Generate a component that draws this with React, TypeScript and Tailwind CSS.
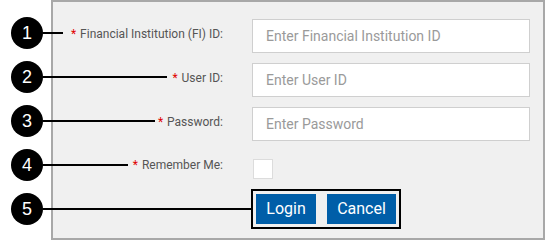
const fields = [
  { label: "Financial Institution (FI) ID:", placeholder: "Enter Financial Institution ID" },
  { label: "User ID:", placeholder: "Enter User ID" },
  { label: "Password:", placeholder: "Enter Password" },
];

// callout markers: circle centre y and where the leader line stops
const callouts = [
  { n: 1, y: 33, end: 63 },
  { n: 2, y: 77, end: 167 },
  { n: 3, y: 121, end: 155 },
  { n: 4, y: 165, end: 128 },
  { n: 5, y: 209, end: 252 },
];

function Label({ text, pb }: { text: string; pb: string }) {
  return (
    <div className={`w-[170px] shrink-0 text-right text-[12px] text-[#555] ${pb}`}>
      <span className="text-[#e00000] mr-[4px]">*</span>
      {text}
    </div>
  );
}

export default function App() {
  return (
    <div
      className="relative w-[545px] h-[240px] bg-white overflow-hidden"
      style={{ fontFamily: "Roboto, 'Liberation Sans', sans-serif" }}
    >
      <div className="ml-[51px] w-[494px] h-[240px] border-2 border-[#a8a8a8] bg-[#f0f0f0] pt-[17px]">
        <div className="flex flex-col gap-[10px]">
          {fields.map((f) => (
            <div key={f.label} className="flex items-center gap-[29px] h-[34px]">
              <Label text={f.label} pb="pb-[5px]" />
              <input
                type={f.label === "Password:" ? "password" : "text"}
                placeholder={f.placeholder}
                className="w-[278px] h-[34px] bg-white border border-[#cfcfcf] px-[13px] text-[14px] text-[#333] placeholder:text-[#9a9a9a] outline-none"
              />
            </div>
          ))}
        </div>

        <div className="flex items-center gap-[30px] mt-[18px] h-[20px]">
          <Label text="Remember Me:" pb="pb-[9px]" />
          <div className="w-[20px] h-[20px] bg-white border border-[#dcdcdc]" />
        </div>

        <div className="flex mt-[10px] pl-[198px]">
          <div className="flex gap-[11px] border-2 border-black p-[3px]">
            <button className="w-[60px] h-[30px] bg-[#005ea8] text-white text-[16px]">Login</button>
            <button className="w-[69px] h-[30px] bg-[#005ea8] text-white text-[16px]">Cancel</button>
          </div>
        </div>
      </div>

      {callouts.map((c) => (
        <div key={c.n}>
          <div
            className="absolute left-[43px] h-[2px] bg-black"
            style={{ top: c.y - 1, width: c.end - 43 }}
          />
          <div
            className="absolute left-[11px] w-[32px] h-[32px] rounded-full bg-black text-white flex items-center justify-center text-[18px]"
            style={{ top: c.y - 16, fontFamily: "'Liberation Sans', Arial, sans-serif" }}
          >
            {c.n}
          </div>
        </div>
      ))}
    </div>
  );
}
